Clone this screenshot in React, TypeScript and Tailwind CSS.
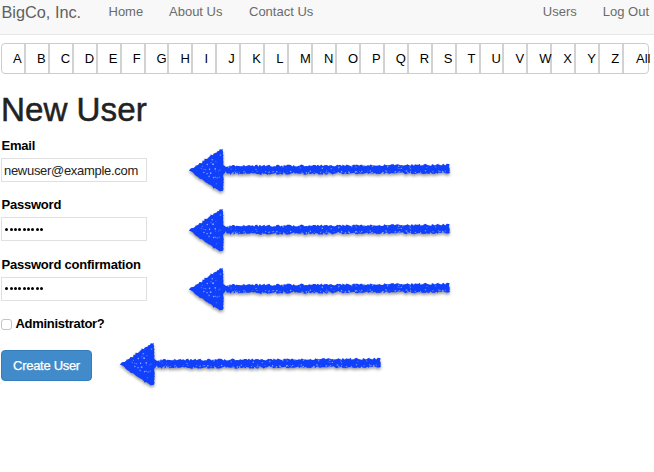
import React from "react";

const letters = [..."ABCDEFGHIJKLMNOPQRSTUVWXYZ", "All"];

function makeRandom(seed: number) {
  let s = seed;
  return () => {
    s = (s * 16807) % 2147483647;
    return s / 2147483647;
  };
}

function chalkOutline() {
  const rnd = makeRandom(4217);
  const pts: string[] = [];
  const edge = (x1: number, y1: number, x2: number, y2: number, jitter: number) => {
    const n = Math.max(2, Math.round(Math.hypot(x2 - x1, y2 - y1) / 1.5));
    for (let i = 0; i < n; i++) {
      const t = i / n;
      const x = x1 + (x2 - x1) * t + (rnd() - 0.5) * jitter;
      const y = y1 + (y2 - y1) * t + (rnd() - 0.5) * jitter;
      pts.push(`${x.toFixed(2)},${y.toFixed(2)}`);
    }
  };
  edge(10, 30, 40, 9.4, 2.4);
  edge(40, 9.4, 43, 9.4, 0.6);
  edge(43, 9.4, 43.4, 26, 1);
  edge(43.4, 26, 269.3, 24.6, 2.1);
  edge(269.3, 24.6, 269.5, 33, 1);
  edge(269.5, 33, 43.4, 34, 2.1);
  edge(43.4, 34, 43.4, 50, 1);
  edge(43.4, 50, 40, 52, 0.6);
  edge(40, 52, 10, 31.5, 1.4);
  return pts.join(" ");
}

function chalkGaps() {
  const rnd = makeRandom(991);
  const gaps: { x: number; y: number; r: number; o: number }[] = [];
  for (let i = 0; i < 120; i++) {
    const x = 44 + rnd() * 224;
    const side = rnd();
    const y = (side < 0.75 ? 31.6 + rnd() * 2 : 26 + rnd() * 4) - (x - 44) * 0.005;
    gaps.push({ x, y, r: 0.4 + rnd() * 0.4, o: 0.3 + rnd() * 0.4 });
  }
  for (let i = 0; i < 24; i++) {
    const x = 20 + rnd() * 22;
    const half = (x - 9.5) * 0.55;
    gaps.push({ x, y: 30.5 + (rnd() * 2 - 1) * half, r: 0.4 + rnd() * 0.5, o: 0.3 + rnd() * 0.5 });
  }
  return gaps;
}

const outline = chalkOutline();
const gaps = chalkGaps();

function Arrow({ className }: { className: string }) {
  return (
    <svg
      className={`pointer-events-none absolute h-[60px] w-[280px] drop-shadow-[0_2px_1.5px_rgba(0,0,0,0.4)] ${className}`}
      viewBox="0 0 280 60"
    >
      <polygon points={outline} fill="#1040fb" />
      {gaps.map((g, i) => (
        <circle key={i} cx={g.x} cy={g.y} r={g.r} fill="#dce4ff" opacity={g.o} />
      ))}
    </svg>
  );
}

function Field({ label, type, value }: { label: string; type: string; value: string }) {
  return (
    <div className="mb-[13.3px] flex flex-col items-start">
      <label className="mb-[3px] h-[18px] pl-[0.5px] text-[13px] leading-[18px] font-bold tracking-[-0.22px]">
        {label}
      </label>
      {type === "password" ? (
        <div
          role="textbox"
          aria-label={label}
          className="flex h-6 w-[145.5px] items-center gap-[1.35px] border border-[#e0e0e0] bg-white pl-[3.2px]"
        >
          {[...value].map((_, i) => (
            <span key={i} className="size-[3px] rounded-full bg-black" />
          ))}
        </div>
      ) : (
        <input
          aria-label={label}
          type={type}
          defaultValue={value}
          className="h-6 w-[145.5px] border border-[#e0e0e0] bg-white pl-[2px] text-[13px] tracking-[-0.3px] text-[#222] outline-none"
        />
      )}
    </div>
  );
}

export default function App() {
  return (
    <div className="relative h-[472px] w-[654px] overflow-hidden bg-white font-['Liberation_Sans',Arial,sans-serif] text-[13px] text-black">
      <nav className="flex h-[35px] border-b border-[#e7e7e7] bg-[#f8f8f8] pr-[5px] pl-[1.5px] text-[#6b6b6b]">
        <a className="w-[107px] pt-px text-[16.3px] leading-[22px] text-[#606060]">BigCo, Inc.</a>
        <a className="w-[60.5px] pt-[3px] leading-[18px]">Home</a>
        <a className="w-[80px] pt-[3px] leading-[18px]">About Us</a>
        <a className="pt-[3px] leading-[18px]">Contact Us</a>
        <div className="ml-auto flex gap-[26px] pt-[3px] leading-[18px]">
          <a>Users</a>
          <a>Log Out</a>
        </div>
      </nav>
      <div className="mt-2 ml-px grid h-[31px] w-[648px] grid-cols-27 rounded-[4px] border border-[#ccc]">
        {letters.map((l, i) => (
          <a
            key={l}
            className={`pt-[6px] pl-[11px] leading-[18px] ${i < 26 ? "border-r-2 border-[#d2d2d2]" : "pl-[12px]"}`}
          >
            {l}
          </a>
        ))}
      </div>
      <main className="pl-px">
        <h1 className="mt-[17px] h-[46px] text-[33.2px] leading-[38px] font-normal text-[#222] [-webkit-text-stroke:0.5px_#222]">
          New User
        </h1>
        <form>
          <div className="pb-px">
            <Field label="Email" type="email" value="newuser@example.com" />
            <div className="h-px" />
            <Field label="Password" type="password" value="foobarbaz" />
            <div className="h-px" />
            <Field label="Password confirmation" type="password" value="foobarbaz" />
          </div>
          <label className="flex h-[18px] items-center gap-[3.5px] leading-[18px] font-bold tracking-[-0.3px]">
            <input
              type="checkbox"
              className="mt-px size-[11px] appearance-none rounded-[3px] border border-[#c4c4c4] bg-white"
            />
            Administrator?
          </label>
          <button
            type="button"
            className="mt-[17.5px] h-[31px] w-[91px] rounded-[4px] border border-[#357ebd] bg-[#428bca] text-[13px] tracking-[-0.3px] whitespace-nowrap text-white [-webkit-text-stroke:0.25px_white]"
          >
            Create User
          </button>
        </form>
      </main>
      <Arrow className="top-[140px] left-[180px]" />
      <Arrow className="top-[200px] left-[180px]" />
      <Arrow className="top-[259px] left-[180px]" />
      <Arrow className="top-[334px] left-[111px]" />
    </div>
  );
}
